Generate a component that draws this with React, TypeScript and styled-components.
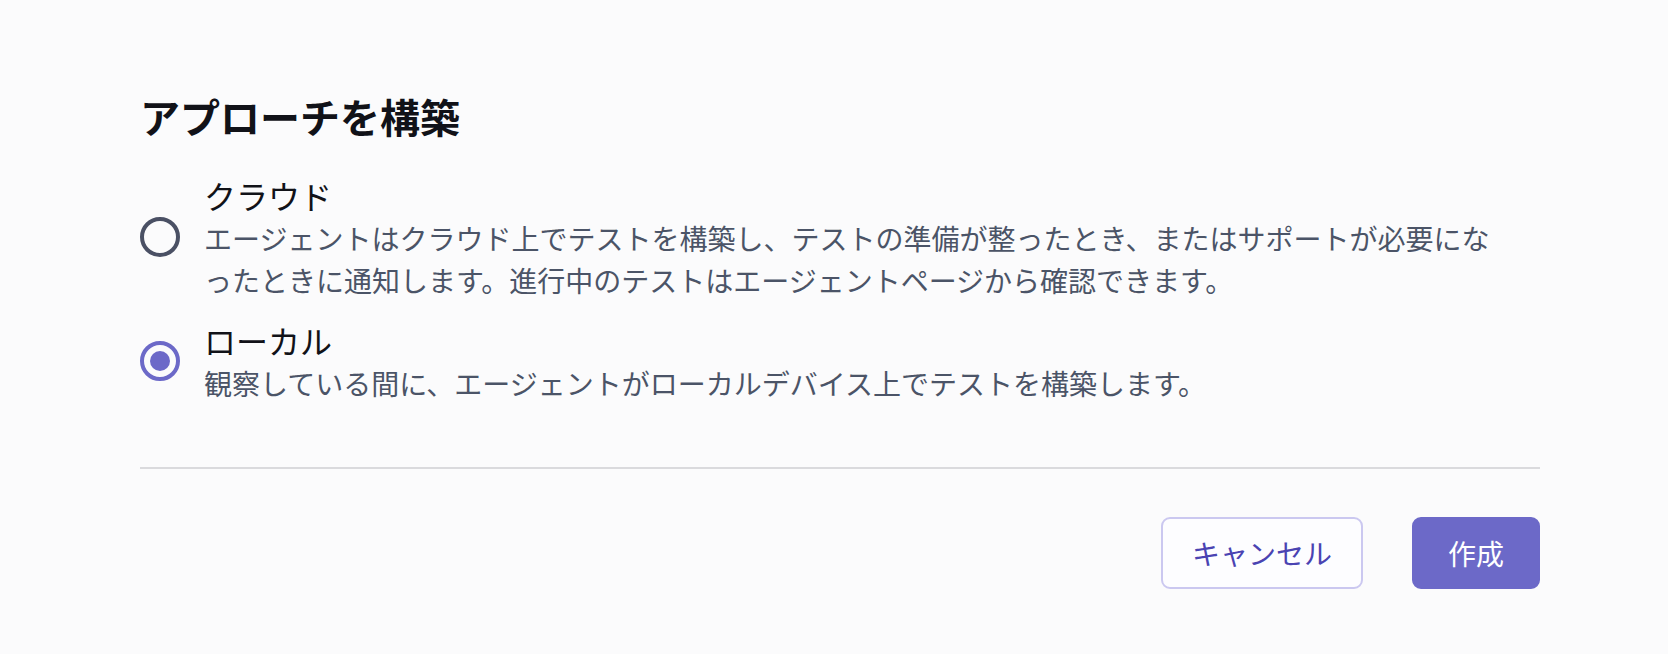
import React, { useState } from 'react'
import styled, { createGlobalStyle } from 'styled-components'

const GlobalStyle = createGlobalStyle`
  html, body {
    margin: 0;
    padding: 0;
    background: #fbfbfc;
  }
  body {
    font-family: "Noto Sans CJK JP", "Noto Sans", sans-serif;
    color: #111218;
  }
`

const Page = styled.div`
  box-sizing: border-box;
  width: 1668px;
  min-height: 654px;
  padding: 92px 128px 0 140px;
`

const Title = styled.h1`
  margin: 0 0 33px;
  font-size: 40px;
  line-height: 48px;
  font-weight: 700;
  color: #111218;
`

const Options = styled.div`
  display: flex;
  flex-direction: column;
  gap: 17px;
`

const Option = styled.label`
  display: flex;
  align-items: center;
  gap: 24px;
  cursor: pointer;
`

const Radio = styled.input.attrs({ type: 'radio' })`
  appearance: none;
  flex: 0 0 auto;
  box-sizing: border-box;
  width: 40px;
  height: 40px;
  margin: 0;
  border-radius: 50%;
  border: 4px solid #4a5064;
  background: #fbfbfc;
  display: grid;
  place-items: center;
  cursor: pointer;

  &::before {
    content: '';
    width: 20px;
    height: 20px;
    border-radius: 50%;
    background: #6c69c8;
    transform: scale(0);
  }

  &:checked {
    border-color: #6c69c8;
  }

  &:checked::before {
    transform: scale(1);
  }
`

const Body = styled.div`
  display: flex;
  flex-direction: column;
`

const Label = styled.div`
  font-size: 32px;
  line-height: 44px;
  color: #111218;
`

const Description = styled.p`
  margin: 0;
  max-width: 1300px;
  font-size: 28px;
  line-height: 42px;
  color: #4b5467;
`

const Divider = styled.hr`
  margin: 63px 0 0;
  border: 0;
  height: 2px;
  background: #dadadd;
`

const Actions = styled.div`
  display: flex;
  justify-content: flex-end;
  gap: 49px;
  margin-top: 48px;
`

const Button = styled.button<{ $primary?: boolean }>`
  box-sizing: border-box;
  height: 72px;
  padding: 0 ${({ $primary }) => ($primary ? '34px' : '29px')};
  border-radius: 9px;
  border: 2px solid ${({ $primary }) => ($primary ? '#6c69c8' : '#cbc8f0')};
  background: ${({ $primary }) => ($primary ? '#6c69c8' : '#fdfdff')};
  color: ${({ $primary }) => ($primary ? '#ffffff' : '#4a43b2')};
  font-family: inherit;
  font-size: 28px;
  line-height: 1;
  cursor: pointer;
`

const approaches = [
  {
    id: 'cloud',
    label: 'クラウド',
    description:
      'エージェントはクラウド上でテストを構築し、テストの準備が整ったとき、またはサポートが必要になったときに通知します。進行中のテストはエージェントページから確認できます。',
  },
  {
    id: 'local',
    label: 'ローカル',
    description: '観察している間に、エージェントがローカルデバイス上でテストを構築します。',
  },
]

const App = () => {
  const [approach, setApproach] = useState('local')

  return (
    <>
      <GlobalStyle />
      <Page>
        <Title>アプローチを構築</Title>
        <Options>
          {approaches.map((a) => (
            <Option key={a.id}>
              <Radio
                name="approach"
                value={a.id}
                checked={approach === a.id}
                onChange={() => setApproach(a.id)}
              />
              <Body>
                <Label>{a.label}</Label>
                <Description>{a.description}</Description>
              </Body>
            </Option>
          ))}
        </Options>
        <Divider />
        <Actions>
          <Button>キャンセル</Button>
          <Button $primary>作成</Button>
        </Actions>
      </Page>
    </>
  )
}

export default App
